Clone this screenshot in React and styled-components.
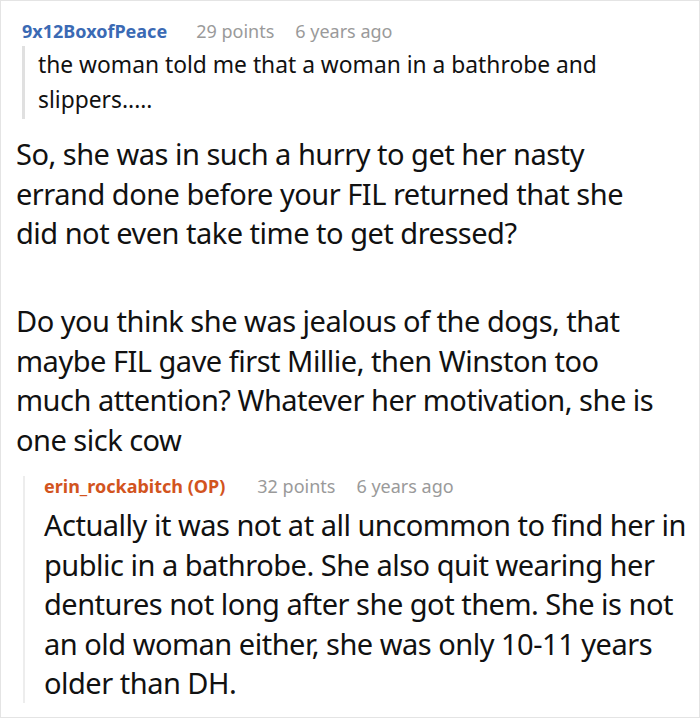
import React from "react";
import styled, { createGlobalStyle } from "styled-components";

const Global = createGlobalStyle`
  html, body { margin: 0; padding: 0; background: #fff; }
  body { font-family: "Noto Sans", "Open Sans", sans-serif; color: #161616; }
`;

const Frame = styled.main`
  box-sizing: border-box;
  width: 700px;
  height: 718px;
  border: 1px solid #e4e4e4;
  padding: 15px 6px 0 15px;
  overflow: hidden;
`;

const Meta = styled.div`
  display: flex;
  align-items: baseline;
  gap: 21px;
  font-size: 18px;
  line-height: ${(p) => p.$lh || 30}px;
  padding-left: ${(p) => p.$indent || 0}px;
  white-space: nowrap;
`;

const Author = styled.span`
  font-weight: 700;
  color: ${(p) => (p.$op ? "#d2541e" : "#3b6ab4")};
  margin-right: ${(p) => (p.$op ? 11 : 8)}px;
`;

const Muted = styled.span`
  color: #9a9a9a;
`;

const Quote = styled.blockquote`
  margin: 0 0 0 6px;
  padding: 1px 0 2px 13px;
  border-left: 3px solid #e0e0e0;
  font-size: 22.8px;
  line-height: 35px;
  color: #111;
`;

const Body = styled.div`
  font-size: 29px;
  letter-spacing: -0.5px;
  line-height: 39.5px;
  color: #111;
  margin-top: ${(p) => p.$top || 0}px;
  padding-right: ${(p) => p.$right || 0}px;

  p { margin: 0; }
  p + p { margin-top: 48.5px; }
`;

const Reply = styled.section`
  margin: 17px 0 0 7px;
  padding: 0 0 0 19px;
  border-left: 2px solid #ededed;
`;

export default function App() {
  return (
    <>
      <Global />
      <Frame>
        <Meta $indent={6}>
          <Author>9x12BoxofPeace</Author>
          <Muted>29 points</Muted>
          <Muted>6 years ago</Muted>
        </Meta>
        <Quote>
          the woman told me that a woman in a bathrobe and slippers.....
        </Quote>
        <Body $top={15} $right={30}>
          <p>
            So, she was in such a hurry to get her nasty errand done before
            your FIL returned that she did not even take time to get dressed?
          </p>
          <p>
            Do you think she was jealous of the dogs, that maybe FIL gave first
            Millie, then Winston too much attention? Whatever her motivation,
            she is one sick cow
          </p>
        </Body>
        <Reply>
          <Meta $lh={20}>
            <Author $op>erin_rockabitch (OP)</Author>
            <Muted>32 points</Muted>
            <Muted>6 years ago</Muted>
          </Meta>
          <Body $top={9}>
            <p>
              Actually it was not at all uncommon to find her in public in a
              bathrobe. She also quit wearing her dentures not long after she
              got them. She is not an old woman either, she was only 10-11
              years older than DH.
            </p>
          </Body>
        </Reply>
      </Frame>
    </>
  );
}
